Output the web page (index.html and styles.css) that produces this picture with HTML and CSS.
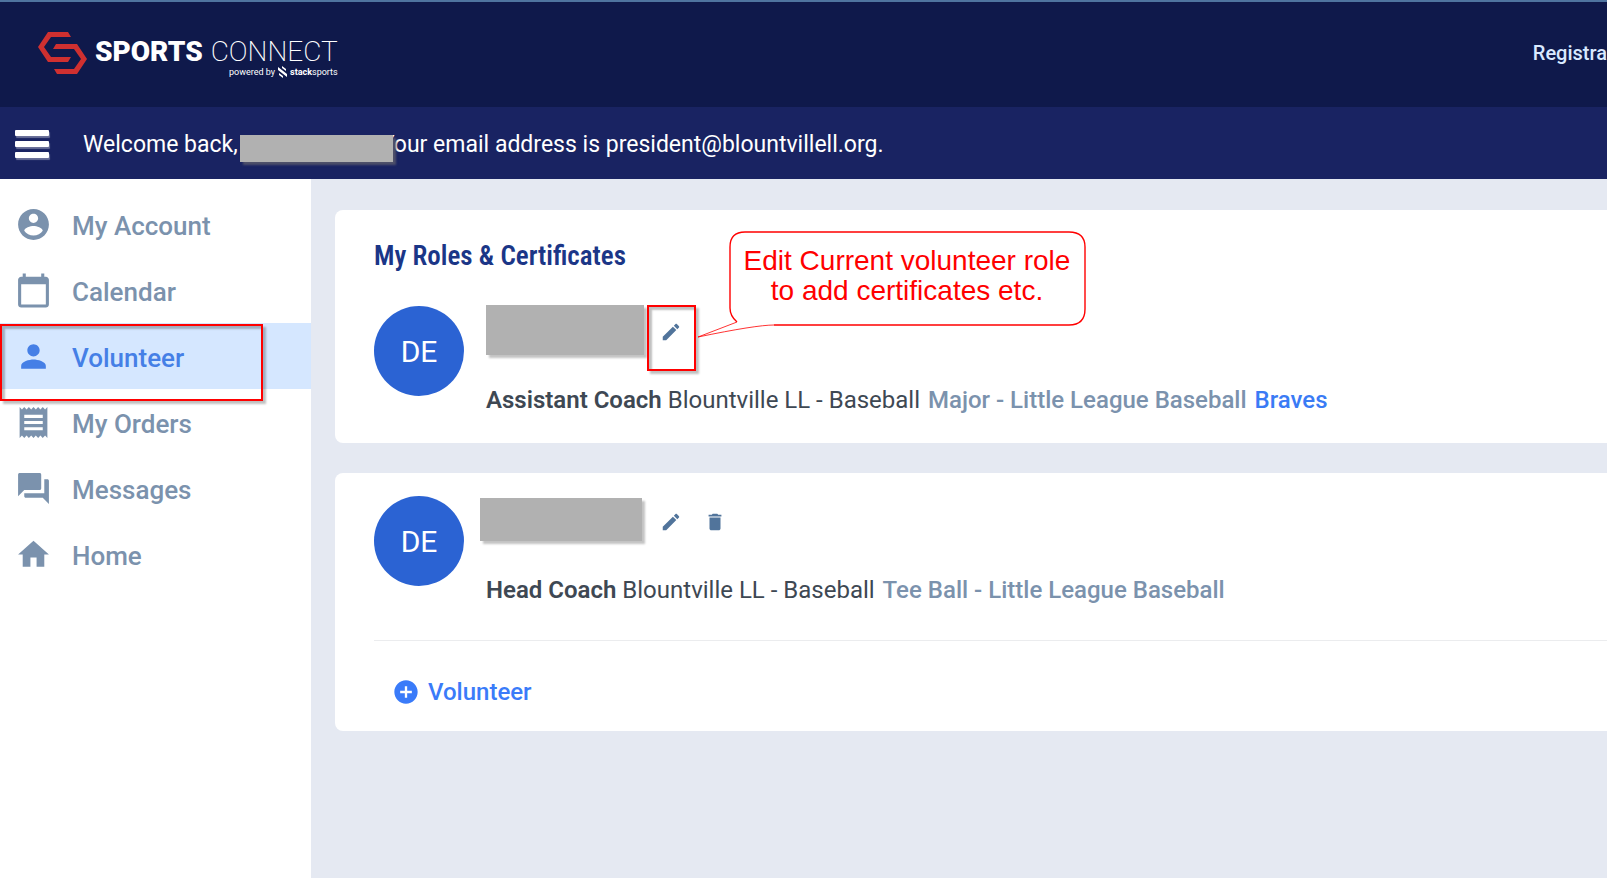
FILE: index.html
```html
<!DOCTYPE html>
<html lang="en">
<head>
  <meta charset="UTF-8" />
  <meta name="viewport" content="width=device-width, initial-scale=1.0"/>
  <title>Sports Connect - Volunteer</title>
  <link rel="stylesheet" href="styles.css">
</head>
<body>

<header class="topbar">
  <a class="logo" href="#">
    <svg class="logo-mark" viewBox="0 0 49 42" aria-hidden="true">
      <path fill="#cf3030" d="M10 0H30L33 5H13L6 15L13 25H18L33 25L30 30H10L0 15Z"/>
      <path fill="#cf3030" d="M18 12H39L49 27L39 42H19L16 37H36L43 27L36 17H15Z"/>
    </svg>
    <span class="logo-text">
      <span class="logo-name"><b>SPORTS</b> <span>CONNECT</span></span>
      <span class="logo-powered">powered by
        <svg viewBox="0 0 9 12" aria-hidden="true"><path fill="#fff" d="M0 1L9 8V11L0 4ZM4 0L8 3V5L4 2ZM1 7L5 10V12L1 9Z"/></svg>
        <span><b>stack</b>sports</span>
      </span>
    </span>
  </a>
  <nav class="topnav"><a href="#">Registra</a></nav>
</header>

<div class="welcome">
  <button class="menu-button" type="button" aria-label="Menu"><span></span><span></span><span></span></button>
  <p class="welcome-text">
    <span>Welcome back,</span>
    <span class="welcome-name"></span>
    <span>Your email address is president@blountvillell.org.</span>
  </p>
</div>

<div class="layout">
  <nav class="sidebar">
    <a href="#"><svg viewBox="0 0 24 24"><path d="M12 2C6.48 2 2 6.48 2 12s4.480 10 10 10 10-4.480 10-10S17.520 2 12 2zm0 3c1.660 0 3 1.340 3 3s-1.340 3-3 3-3-1.340-3-3 1.340-3 3-3zm0 14.200c-2.500 0-4.710-1.280-6-3.220.030-1.990 4-3.080 6-3.080 1.990 0 5.970 1.090 6 3.080-1.290 1.940-3.500 3.220-6 3.220z"/></svg><span>My Account</span></a>
    <a href="#"><svg viewBox="0 0 24 24"><path d="M20 3h-1V1h-2v2H7V1H5v2H4c-1.100 0-2 .9-2 2v16c0 1.100.9 2 2 2h16c1.100 0 2-.9 2-2V5c0-1.100-.9-2-2-2zm0 18H4V8h16v13z"/></svg><span>Calendar</span></a>
    <a href="#" class="active"><svg viewBox="0 0 24 24"><path d="M12 12c2.210 0 4-1.790 4-4s-1.790-4-4-4-4 1.790-4 4 1.790 4 4 4zm0 2c-2.670 0-8 1.340-8 4v2h16v-2c0-2.660-5.330-4-8-4z"/></svg><span>Volunteer</span><i class="marker marker-nav"></i></a>
    <a href="#"><svg viewBox="0 0 24 24"><path d="M18 17H6v-2h12v2zm0-4H6v-2h12v2zm0-4H6V7h12v2zM3 22l1.500-1.500L6 22l1.500-1.500L9 22l1.500-1.500L12 22l1.500-1.500L15 22l1.500-1.500L18 22l1.500-1.500L21 22V2l-1.500 1.500L18 2l-1.500 1.500L15 2l-1.500 1.500L12 2l-1.500 1.500L9 2 7.500 3.500 6 2 4.500 3.500 3 2v20z"/></svg><span>My Orders</span></a>
    <a href="#"><svg viewBox="0 0 24 24"><path d="M21 6h-2v9H6v2c0 .55.45 1 1 1h11l4 4V7c0-.55-.45-1-1-1zm-4 6V3c0-.55-.45-1-1-1H3c-.55 0-1 .45-1 1v14l4-4h10c.55 0 1-.45 1-1z"/></svg><span>Messages</span></a>
    <a href="#"><svg viewBox="0 0 24 24"><path d="M10 20v-6h4v6h5v-8h3L12 3 2 12h3v8z"/></svg><span>Home</span></a>
  </nav>

  <main class="content">
    <section class="card">
      <h1>My Roles &amp; Certificates</h1>
      <div class="role">
        <div class="avatar">DE</div>
        <div class="role-body">
          <div class="role-head">
            <div class="role-name"><span class="redacted redacted-first"></span></div>
            <button class="icon-button" type="button" aria-label="Edit role">
              <svg viewBox="0 0 24 24"><path d="M3 17.250V21h3.750L17.810 9.940l-3.750-3.750L3 17.250zM20.710 7.040c.39-.39.39-1.020 0-1.410l-2.340-2.340c-.39-.39-1.020-.39-1.410 0l-1.830 1.830 3.750 3.750 1.830-1.830z"/></svg>
              <i class="marker marker-edit"></i>
            </button>
          </div>
          <p class="role-line"><b>Assistant Coach</b> Blountville LL - Baseball <span class="division">Major - Little League Baseball</span> <a href="#">Braves</a></p>
        </div>
      </div>
      <div class="callout">
        <svg viewBox="0 0 390 108" aria-hidden="true">
          <path fill="#fff" stroke="#f00" stroke-width="1.400" d="M41 92Q34 86 34 78V17Q34 2 49 2H373Q389 2 389 17V79Q389 95 373 95H78"/>
          <path fill="#fff" stroke="#f00" stroke-width=".8" d="M41 92L2 107Q60 95 78 95"/>
        </svg>
        <p>Edit Current volunteer role<br>to add certificates etc.</p>
      </div>
    </section>

    <section class="card card-plain">
      <div class="role">
        <div class="avatar">DE</div>
        <div class="role-body">
          <div class="role-head">
            <div class="role-name"><span class="redacted redacted-second"></span></div>
            <button class="icon-button" type="button" aria-label="Edit role">
              <svg viewBox="0 0 24 24"><path d="M3 17.250V21h3.750L17.810 9.940l-3.750-3.750L3 17.250zM20.710 7.040c.39-.39.39-1.020 0-1.410l-2.340-2.340c-.39-.39-1.020-.39-1.410 0l-1.830 1.830 3.750 3.750 1.830-1.830z"/></svg>
            </button>
            <button class="icon-button" type="button" aria-label="Delete role">
              <svg viewBox="0 0 24 24"><path d="M6 19c0 1.100.9 2 2 2h8c1.100 0 2-.9 2-2V7H6v12zM19 4h-3.500l-1-1h-5l-1 1H5v2h14V4z"/></svg>
            </button>
          </div>
          <p class="role-line"><b>Head Coach</b> Blountville LL - Baseball <span class="division">Tee Ball - Little League Baseball</span></p>
        </div>
      </div>
      <div class="card-footer">
        <button class="add-button" type="button">
          <svg viewBox="0 0 24 24"><path d="M12 2C6.480 2 2 6.480 2 12s4.480 10 10 10 10-4.480 10-10S17.520 2 12 2zm5 11h-4v4h-2v-4H7v-2h4V7h2v4h4v2z"/></svg>
          Volunteer
        </button>
      </div>
    </section>
  </main>
</div>

</body>
</html>
```
FILE: styles.css
```css
* {
  margin: 0;
  padding: 0;
  box-sizing: border-box;
}

body {
  display: flex;
  flex-direction: column;
  min-height: 100vh;
  overflow-x: hidden;
  background: #e5e9f2;
  font-family: Roboto, 'Liberation Sans', sans-serif;
  color: #3e4853;
}

a {
  color: inherit;
  text-decoration: none;
}

button {
  border: 0;
  background: none;
  font: inherit;
  color: inherit;
  cursor: pointer;
}

/* Top bar */
.topbar {
  display: flex;
  justify-content: space-between;
  align-items: center;
  height: 107px;
  padding-left: 38px;
  border-top: 2px solid #4f74a0;
  background: #0f194b;
}

.logo {
  display: flex;
  gap: 8px;
  color: #fff;
}

.logo-mark {
  width: 49px;
  height: 42px;
}

.logo-text {
  display: flex;
  flex-direction: column;
  align-items: flex-end;
  padding-top: 6px;
}

.logo-name {
  display: flex;
  gap: 8px;
  font-size: 28px;
  line-height: 28px;
}

.logo-name b {
  font-weight: 900;
}

.logo-name span {
  font-weight: 200;
}

.logo-powered {
  display: flex;
  align-items: center;
  gap: 3px;
  font-size: 9px;
  line-height: 10px;
}

.logo-powered svg {
  width: 9px;
  height: 12px;
}

.topnav {
  padding-bottom: 4px;
  color: #d9e9ff;
  font-size: 20px;
  font-weight: 500;
}

/* Welcome bar */
.welcome {
  display: flex;
  align-items: center;
  gap: 34px;
  height: 72px;
  padding: 2px 15px 0;
  background: #192362;
  color: #fff;
}

.menu-button {
  display: flex;
  flex-direction: column;
  gap: 5px;
  width: 34px;
}

.menu-button span {
  height: 6px;
  border-radius: 1px;
  background: #fff;
  box-shadow: 1px 2px 1px #6a7099;
}

.welcome-text {
  display: flex;
  align-items: center;
  padding-top: 2px;
  font-size: 23px;
  line-height: 28px;
}

.welcome-name {
  z-index: 1;
  width: 153px;
  height: 27px;
  margin: 7px -12px 0 2px;
  background: #b1b1b1;
  box-shadow: 3px 3px 2px #4e506a;
}

.layout {
  display: flex;
  flex: 1;
}

/* Sidebar */
.sidebar {
  width: 311px;
  flex: none;
  padding-top: 12px;
  background: #fff;
}

.sidebar a {
  position: relative;
  display: flex;
  align-items: center;
  gap: 20px;
  height: 66px;
  padding-left: 15px;
  color: #7b92ad;
  font-size: 26px;
  font-weight: 500;
}

.sidebar a span {
  padding-top: 4px;
}

.sidebar svg {
  width: 37px;
  height: 37px;
  fill: currentColor;
}

.sidebar .active {
  background: #d5e7ff;
  color: #457fe6;
}

/* Cards */
.content {
  flex: 1;
  display: flex;
  flex-direction: column;
  gap: 30px;
  min-width: 0;
  padding: 31px 0 31px 24px;
}

.card {
  position: relative;
  padding: 28px 0 29px 39px;
  border-radius: 8px 0 0 8px;
  background: #fff;
}

.card-plain {
  padding: 23px 0 0 39px;
}

h1 {
  margin-bottom: 32px;
  color: #1b3687;
  font-family: 'Roboto Condensed', 'Open Sans Condensed', Roboto, sans-serif;
  font-size: 27px;
  font-weight: 600;
  line-height: 36px;
}

.role {
  display: flex;
  gap: 22px;
}

.avatar {
  display: flex;
  flex: none;
  align-items: center;
  justify-content: center;
  width: 90px;
  height: 90px;
  border-radius: 50%;
  background: #2b63d3;
  color: #fff;
  font-size: 30px;
}

.role-head {
  display: flex;
  height: 52px;
  margin-bottom: 28px;
}

.role-name {
  position: relative;
  width: 163px;
}

.icon-button {
  position: relative;
  display: flex;
  align-items: center;
  justify-content: center;
  width: 44px;
  color: #51749b;
}

.icon-button svg {
  width: 22px;
  height: 22px;
  fill: currentColor;
}

.role-line {
  font-size: 24px;
  line-height: 28px;
}

.role-line b {
  font-weight: 600;
}

.division {
  margin: 0 2px;
  color: #7b92ad;
  font-weight: 500;
}

.role-line a {
  color: #3a7bf5;
  font-weight: 500;
}

.card-footer {
  margin-top: 36px;
  padding: 34px 20px 22px;
  border-top: 1px solid #ebecee;
}

.add-button {
  display: flex;
  align-items: center;
  gap: 8px;
  color: #3a7bf9;
  font-size: 24px;
  font-weight: 500;
  line-height: 34px;
}

.add-button svg {
  width: 28px;
  height: 28px;
  margin-left: -2px;
  fill: currentColor;
}

/* Boxes laid over the page */
.redacted {
  position: absolute;
  background: #b1b1b1;
  box-shadow: 3px 3px 2px #c3c3c3;
}

.redacted-first {
  top: -1px;
  left: 0;
  width: 158px;
  height: 50px;
}

.redacted-second {
  top: 2px;
  left: -6px;
  width: 162px;
  height: 43px;
}

.marker {
  position: absolute;
  border: 2px solid #f00;
  box-shadow: 3px 3px 2px rgba(0, 0, 0, 0.25), inset 3px 3px 2px rgba(0, 0, 0, 0.25);
}

.marker-nav {
  z-index: 1;
  top: 1px;
  left: 0;
  width: 263px;
  height: 77px;
}

.marker-edit {
  top: -1px;
  left: -2px;
  width: 49px;
  height: 66px;
}

.callout {
  position: absolute;
  top: 20px;
  left: 361px;
  width: 390px;
}

.callout svg {
  display: block;
}

.callout p {
  position: absolute;
  top: 16px;
  left: 32px;
  right: 0;
  color: #f00;
  font-family: 'Liberation Sans', Arial, sans-serif;
  font-size: 28px;
  line-height: 30px;
  text-align: center;
}
```
